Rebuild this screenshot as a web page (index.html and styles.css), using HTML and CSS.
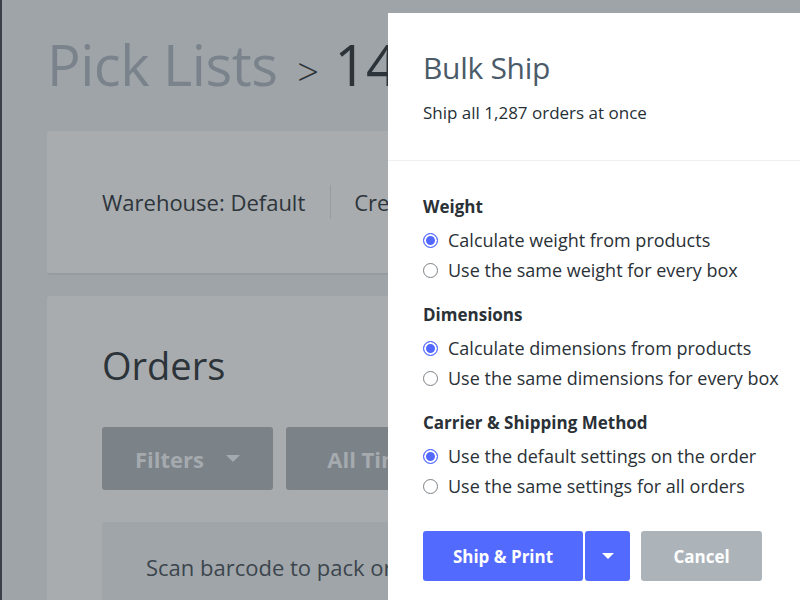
FILE: index.html
```html
<!DOCTYPE html>
<html>
<head>
<meta charset="utf-8">
<link rel="stylesheet" href="styles.css">
</head>
<body>
<div class="app">
  <div class="rail"></div>
  <main class="main">
    <h1 class="crumb"><span class="crumb-parent">Pick Lists</span><span class="crumb-sep">&gt;</span><span class="crumb-cur">141</span></h1>
    <section class="card info">
      <span class="info-item">Warehouse: Default</span>
      <span class="info-div"></span>
      <span class="info-item">Created</span>
    </section>
    <section class="card orders">
      <h2 class="orders-title">Orders</h2>
      <div class="toolbar">
        <button class="tbtn filters">Filters <span class="caret"></span></button>
        <button class="tbtn">All Time</button>
      </div>
      <div class="scan">Scan barcode to pack orders</div>
    </section>
  </main>
</div>

<div class="modal">
  <header class="modal-head">
    <h2 class="modal-title">Bulk Ship</h2>
    <p class="modal-sub">Ship all 1,287 orders at once</p>
  </header>
  <div class="modal-body">
    <div class="group">
      <h3 class="group-title">Weight</h3>
      <label class="opt"><span class="radio on"></span>Calculate weight from products</label>
      <label class="opt"><span class="radio"></span>Use the same weight for every box</label>
    </div>
    <div class="group">
      <h3 class="group-title">Dimensions</h3>
      <label class="opt"><span class="radio on"></span>Calculate dimensions from products</label>
      <label class="opt"><span class="radio"></span>Use the same dimensions for every box</label>
    </div>
    <div class="group">
      <h3 class="group-title">Carrier &amp; Shipping Method</h3>
      <label class="opt"><span class="radio on"></span>Use the default settings on the order</label>
      <label class="opt"><span class="radio"></span>Use the same settings for all orders</label>
    </div>
    <div class="actions">
      <button class="btn primary">Ship &amp; Print</button>
      <button class="btn primary drop"><span class="caret white"></span></button>
      <button class="btn cancel">Cancel</button>
    </div>
  </div>
</div>
</body>
</html>
```

FILE: styles.css
```css
* { box-sizing: border-box; }
html, body { margin: 0; padding: 0; }
body {
  width: 800px;
  height: 600px;
  overflow: hidden;
  font-family: "Open Sans", "Liberation Sans", sans-serif;
  background: #9fa4a8;
  position: relative;
}
.app { display: flex; height: 600px; }
.rail { width: 2px; background: #394047; flex: none; }
.main { width: 386px; flex: none; padding: 28px 0 0 45px; overflow: hidden; }
.crumb {
  margin: 0;
  font-weight: 400;
  font-size: 56px;
  line-height: 72px;
  height: 72px;
  white-space: nowrap;
  display: flex;
  align-items: baseline;
  letter-spacing: -0.5px;
}
.crumb-parent { color: #7a838b; }
.crumb-sep { color: #2c3339; font-size: 38px; margin: 0 16px 0 20px; font-weight: 300; }
.crumb-cur { color: #2c3339; }
.card {
  background: #a8acaf;
  border-radius: 3px;
  width: 800px;
}
.info {
  margin-top: 31px;
  height: 144px;
  display: flex;
  align-items: center;
  padding-left: 55px;
  border-bottom: 2px solid #979ca0;
  white-space: nowrap;
}
.info-item { font-size: 22px; color: #2d353b; }
.info-div { width: 1px; height: 34px; background: #979ca0; margin: 0 23px 0 25px; flex: none; }
.orders { margin-top: 21px; height: 400px; padding: 47px 0 0 55px; }
.orders-title { margin: 0; font-weight: 400; font-size: 38px; color: #2c3339; line-height: 44px; }
.toolbar { display: flex; gap: 13px; margin-top: 40px; }
.tbtn {
  font-family: inherit;
  border: none;
  background: #7b8288;
  color: #a5aaaf;
  font-weight: 700;
  font-size: 22px;
  height: 63px;
  width: 171px;
  flex: none;
  border-radius: 3px;
  display: flex;
  align-items: center;
  justify-content: center;
  gap: 22px;
  padding: 0;
  white-space: nowrap;
}
.caret {
  width: 0; height: 0;
  border-left: 7px solid transparent;
  border-right: 7px solid transparent;
  border-top: 7px solid #a5aaaf;
}
.caret.white { border-left-width: 6px; border-right-width: 6px; border-top: 6px solid #fff; }
.scan {
  margin-top: 32px;
  background: #a0a5a9;
  border-radius: 3px;
  height: 120px;
  padding: 30px 0 0 44px;
  font-size: 22px;
  color: #3c454d;
  white-space: nowrap;
}

.modal {
  position: absolute;
  left: 388px;
  top: 13px;
  width: 412px;
  height: 587px;
  background: #fff;
  color: #262f36;
}
.modal-head {
  padding: 36px 35px 0 35px;
  height: 148px;
  border-bottom: 1px solid #eef1f4;
}
.modal-title { margin: 0; font-weight: 400; font-size: 30px; color: #4b5b69; line-height: 38px; letter-spacing: -0.3px; }
.modal-sub { margin: 15px 0 0; font-size: 17px; line-height: 22px; color: #262f36; }
.modal-body { padding: 34px 35px 0 35px; }
.group { margin-bottom: 18px; }
.group-title { margin: 0 0 6px; font-size: 17px; font-weight: 700; line-height: 24px; color: #2a3137; }
.opt {
  display: flex;
  align-items: center;
  height: 30px;
  font-size: 18px;
  color: #2a3137;
  white-space: nowrap;
}
.radio {
  width: 15px; height: 15px;
  border-radius: 50%;
  border: 1px solid #7d8287;
  margin-right: 10px;
  flex: none;
  background: #fff;
}
.radio.on {
  border: 1.5px solid #5268ff;
  box-shadow: inset 0 0 0 2px #fff;
  background: #5268ff;
}
.actions { display: flex; margin-top: 30px; }
.btn {
  font-family: inherit;
  border: none;
  height: 50px;
  border-radius: 3px;
  font-size: 17px;
  font-weight: 700;
  color: #fff;
  padding: 0;
  display: flex;
  align-items: center;
  justify-content: center;
}
.primary { background: #536aff; }
.btn.primary:first-child { width: 160px; }
.drop { width: 45px; margin-left: 2px; }
.cancel { background: #acb4ba; width: 121px; margin-left: 11px; }
```
